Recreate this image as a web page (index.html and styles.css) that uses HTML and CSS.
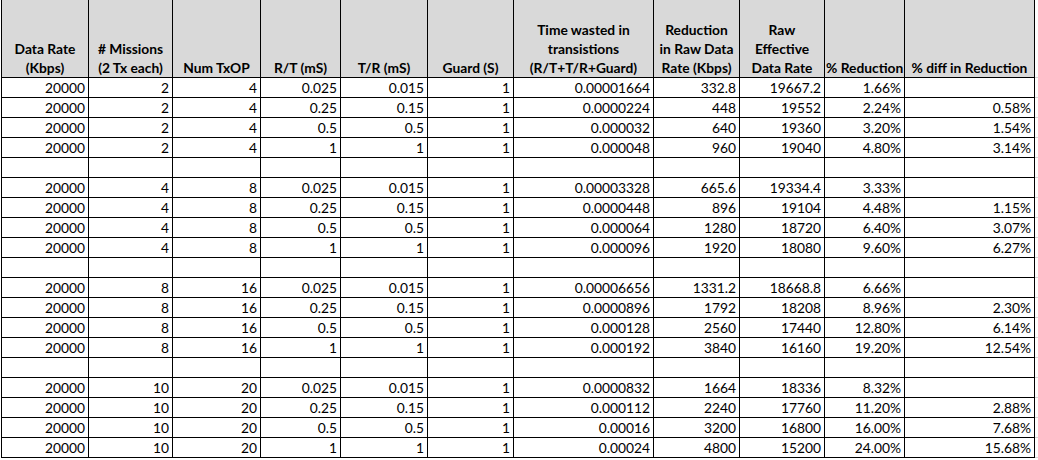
FILE: index.html
```html
<!DOCTYPE html>
<html lang="en">
<head>
<meta charset="utf-8">
<title>Data Rate Reduction</title>
<link rel="stylesheet" href="styles.css">
</head>
<body>
<div class="sheet">
<table class="grid">
<colgroup>
<col class="c1"><col class="c2"><col class="c3"><col class="c4"><col class="c5"><col class="c6"><col class="c7"><col class="c8"><col class="c9"><col class="c10"><col class="c11"><col class="cx">
</colgroup>
<thead>
<tr class="head">
<th>Data Rate<br>(Kbps)</th>
<th># Missions<br>(2 Tx each)</th>
<th>Num TxOP</th>
<th>R/T (mS)</th>
<th>T/R (mS)</th>
<th>Guard (S)</th>
<th>Time wasted in<br>transistions<br>(R/T+T/R+Guard)</th>
<th>Reduction<br>in Raw Data<br>Rate (Kbps)</th>
<th>Raw<br>Effective<br>Data Rate</th>
<th>% Reduction</th>
<th>% diff in Reduction</th>
<td class="gx"></td>
</tr>
</thead>
<tbody>
<tr><td>20000</td><td>2</td><td>4</td><td>0.025</td><td>0.015</td><td>1</td><td>0.00001664</td><td>332.8</td><td>19667.2</td><td>1.66%</td><td></td><td class="gx"></td></tr>
<tr><td>20000</td><td>2</td><td>4</td><td>0.25</td><td>0.15</td><td>1</td><td>0.0000224</td><td>448</td><td>19552</td><td>2.24%</td><td>0.58%</td><td class="gx"></td></tr>
<tr><td>20000</td><td>2</td><td>4</td><td>0.5</td><td>0.5</td><td>1</td><td>0.000032</td><td>640</td><td>19360</td><td>3.20%</td><td>1.54%</td><td class="gx"></td></tr>
<tr><td>20000</td><td>2</td><td>4</td><td>1</td><td>1</td><td>1</td><td>0.000048</td><td>960</td><td>19040</td><td>4.80%</td><td>3.14%</td><td class="gx"></td></tr>
<tr><td></td><td></td><td></td><td></td><td></td><td></td><td></td><td></td><td></td><td></td><td></td><td class="gx"></td></tr>
<tr><td>20000</td><td>4</td><td>8</td><td>0.025</td><td>0.015</td><td>1</td><td>0.00003328</td><td>665.6</td><td>19334.4</td><td>3.33%</td><td></td><td class="gx"></td></tr>
<tr><td>20000</td><td>4</td><td>8</td><td>0.25</td><td>0.15</td><td>1</td><td>0.0000448</td><td>896</td><td>19104</td><td>4.48%</td><td>1.15%</td><td class="gx"></td></tr>
<tr><td>20000</td><td>4</td><td>8</td><td>0.5</td><td>0.5</td><td>1</td><td>0.000064</td><td>1280</td><td>18720</td><td>6.40%</td><td>3.07%</td><td class="gx"></td></tr>
<tr><td>20000</td><td>4</td><td>8</td><td>1</td><td>1</td><td>1</td><td>0.000096</td><td>1920</td><td>18080</td><td>9.60%</td><td>6.27%</td><td class="gx"></td></tr>
<tr><td></td><td></td><td></td><td></td><td></td><td></td><td></td><td></td><td></td><td></td><td></td><td class="gx"></td></tr>
<tr><td>20000</td><td>8</td><td>16</td><td>0.025</td><td>0.015</td><td>1</td><td>0.00006656</td><td>1331.2</td><td>18668.8</td><td>6.66%</td><td></td><td class="gx"></td></tr>
<tr><td>20000</td><td>8</td><td>16</td><td>0.25</td><td>0.15</td><td>1</td><td>0.0000896</td><td>1792</td><td>18208</td><td>8.96%</td><td>2.30%</td><td class="gx"></td></tr>
<tr><td>20000</td><td>8</td><td>16</td><td>0.5</td><td>0.5</td><td>1</td><td>0.000128</td><td>2560</td><td>17440</td><td>12.80%</td><td>6.14%</td><td class="gx"></td></tr>
<tr><td>20000</td><td>8</td><td>16</td><td>1</td><td>1</td><td>1</td><td>0.000192</td><td>3840</td><td>16160</td><td>19.20%</td><td>12.54%</td><td class="gx"></td></tr>
<tr><td></td><td></td><td></td><td></td><td></td><td></td><td></td><td></td><td></td><td></td><td></td><td class="gx"></td></tr>
<tr><td>20000</td><td>10</td><td>20</td><td>0.025</td><td>0.015</td><td>1</td><td>0.0000832</td><td>1664</td><td>18336</td><td>8.32%</td><td></td><td class="gx"></td></tr>
<tr><td>20000</td><td>10</td><td>20</td><td>0.25</td><td>0.15</td><td>1</td><td>0.000112</td><td>2240</td><td>17760</td><td>11.20%</td><td>2.88%</td><td class="gx"></td></tr>
<tr><td>20000</td><td>10</td><td>20</td><td>0.5</td><td>0.5</td><td>1</td><td>0.00016</td><td>3200</td><td>16800</td><td>16.00%</td><td>7.68%</td><td class="gx"></td></tr>
<tr><td>20000</td><td>10</td><td>20</td><td>1</td><td>1</td><td>1</td><td>0.00024</td><td>4800</td><td>15200</td><td>24.00%</td><td>15.68%</td><td class="gx"></td></tr>
</tbody>
</table>
</div>
</body>
</html>
```

FILE: styles.css
```css
html, body {
  margin: 0;
  padding: 0;
  background: #ffffff;
}

.sheet {
  padding: 0 0 0 1px;
  overflow: hidden;
}

.grid {
  border-collapse: collapse;
  table-layout: fixed;
  width: 1037px;
  font-family: Lato, "Liberation Sans", sans-serif;
  font-size: 13.8px;
  color: #000000;
}

.c1 { width: 87px; }
.c2 { width: 84px; }
.c3 { width: 88px; }
.c4 { width: 80px; }
.c5 { width: 87px; }
.c6 { width: 86px; }
.c7 { width: 140px; }
.c8 { width: 86px; }
.c9 { width: 85px; }
.c10 { width: 80px; }
.c11 { width: 130px; }
.cx { width: 4px; }

.grid th,
.grid td {
  border: 1px solid #000000;
  white-space: nowrap;
  overflow: visible;
}

.head th {
  background: #d9d9d9;
  font-weight: 700;
  text-align: center;
  vertical-align: bottom;
  line-height: 19px;
  height: 77px;
  padding: 0 1px 0;
  border-top: none;
}

.grid tbody td {
  height: 19px;
  line-height: 18px;
  padding: 0 3px 0 2px;
  text-align: right;
  vertical-align: bottom;
}

.grid .gx {
  border-top: none;
  border-right: none;
  border-left: none;
  border-bottom: 1px solid #d4d4d4;
  padding: 0;
  background: #ffffff;
}
```
